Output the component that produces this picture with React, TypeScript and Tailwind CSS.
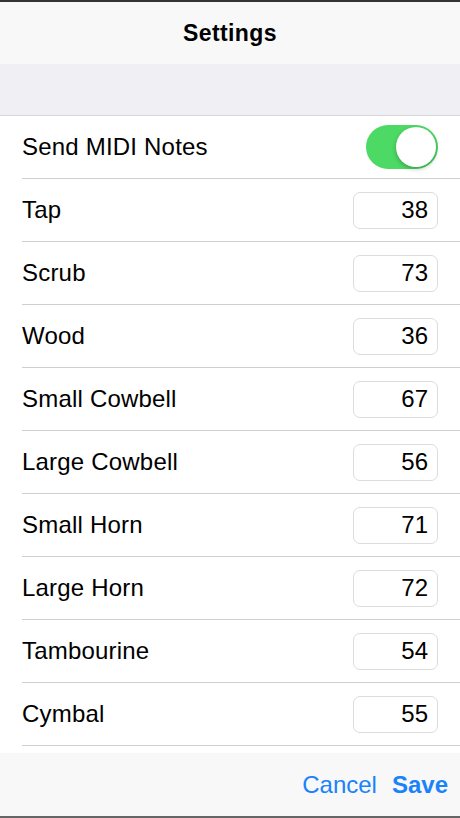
const rows: [string, number][] = [
  ["Tap", 38],
  ["Scrub", 73],
  ["Wood", 36],
  ["Small Cowbell", 67],
  ["Large Cowbell", 56],
  ["Small Horn", 71],
  ["Large Horn", 72],
  ["Tambourine", 54],
  ["Cymbal", 55],
];

function Toggle() {
  return (
    <div className="relative h-[44px] w-[72px] rounded-full bg-[#4cd964]">
      <div className="absolute right-[2px] top-[2px] h-[40px] w-[40px] rounded-full bg-white shadow-[0_2px_4px_rgba(0,0,0,0.25)]" />
    </div>
  );
}

export default function App() {
  return (
    <div className="flex h-[818px] w-[460px] flex-col overflow-hidden bg-white font-['Liberation_Sans',Arial,sans-serif] text-black">
      <div className="h-[2px] bg-[#333]" />
      <header className="flex h-[62px] items-center justify-center bg-[#f8f8f8]">
        <h1 className="text-[23px] font-bold tracking-[0.4px]">Settings</h1>
      </header>
      <div className="h-[52px] border-b border-[#d8d8dc] bg-[#efeff4]" />
      <div className="flex-1">
        <div className="ml-[22px] flex h-[63px] items-center justify-between border-b border-[#cfcfd3] pr-[22px]">
          <span className="text-[24px] tracking-[0.2px]">Send MIDI Notes</span>
          <Toggle />
        </div>
        {rows.map(([label, value]) => (
          <div
            key={label}
            className="ml-[22px] flex h-[63px] items-center justify-between border-b border-[#cfcfd3] pr-[22px]"
          >
            <span className="text-[24px] tracking-[0.2px]">{label}</span>
            <div className="flex h-[37px] w-[85px] items-center justify-end rounded-[7px] border border-[#dcdcdc] pr-[9px] text-[24px]">
              {value}
            </div>
          </div>
        ))}
      </div>
      <footer className="flex h-[63px] items-center justify-end gap-[15px] bg-[#f8f8f8] pr-[12px] text-[24px] text-[#1a82fb]">
        <span>Cancel</span>
        <span className="font-bold">Save</span>
      </footer>
      <div className="h-[2px] bg-[#666]" />
    </div>
  );
}
